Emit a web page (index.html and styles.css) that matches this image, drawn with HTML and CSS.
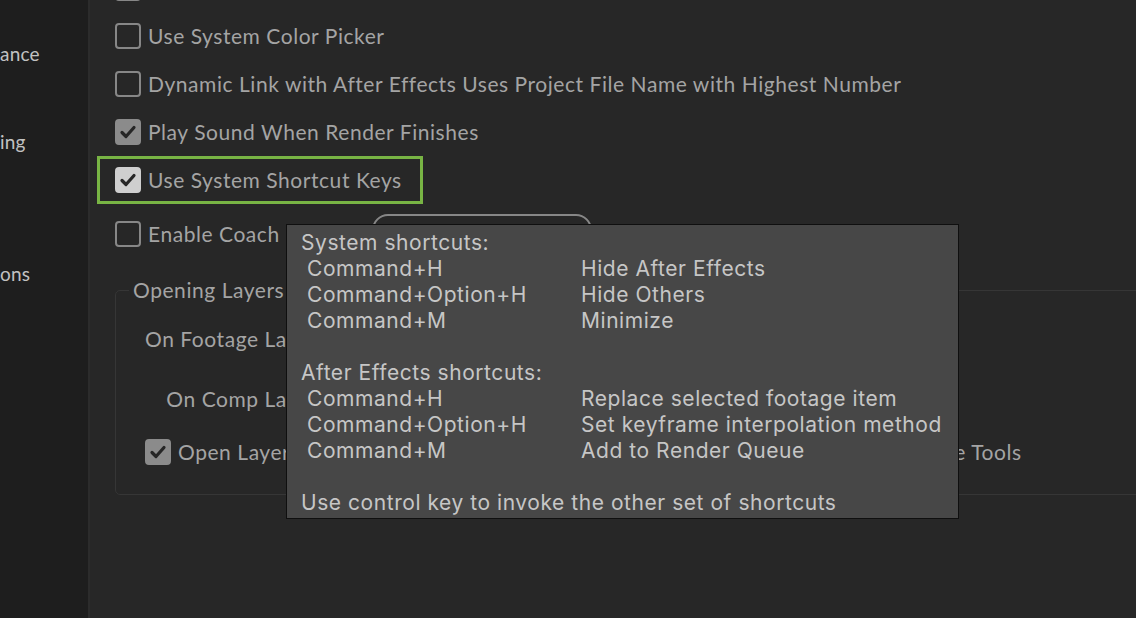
FILE: index.html
```html
<!DOCTYPE html>
<html lang="en">
<head>
<meta charset="utf-8">
<title>Preferences - General</title>
<link rel="stylesheet" href="styles.css">
</head>
<body>
<div class="app">
  <aside class="sidebar">
    <div class="nav-item">ance</div>
    <div class="nav-item"></div>
    <div class="nav-item">ing</div>
    <div class="nav-item"></div>
    <div class="nav-item"></div>
    <div class="nav-item">ons</div>
  </aside>

  <main class="main">
    <div class="opt-list">
      <div class="opt">
        <span class="cb"></span>
        <span class="label">Allow Scripts to Write Files and Access Network</span>
      </div>
      <div class="opt">
        <span class="cb"></span>
        <span class="label">Use System Color Picker</span>
      </div>
      <div class="opt">
        <span class="cb"></span>
        <span class="label">Dynamic Link with After Effects Uses Project File Name with Highest Number</span>
      </div>
      <div class="opt">
        <span class="cb on"><svg viewBox="0 0 26 26" width="26" height="26"><path d="M7 13.5 L11 17.5 L19 8.5" fill="none" stroke="#262626" stroke-width="3.2" stroke-linecap="round" stroke-linejoin="round"/></svg></span>
        <span class="label">Play Sound When Render Finishes</span>
      </div>
      <div class="opt">
        <span class="cb on light"><svg viewBox="0 0 26 26" width="26" height="26"><path d="M7 13.5 L11 17.5 L19 8.5" fill="none" stroke="#262626" stroke-width="3.2" stroke-linecap="round" stroke-linejoin="round"/></svg></span>
        <span class="label">Use System Shortcut Keys</span>
        <span class="highlight"></span>
      </div>
      <div class="opt coach">
        <span class="cb"></span>
        <span class="label coach-label">Enable Coach Marks</span>
        <button class="btn">Reset Coach Marks</button>
      </div>
    </div>

    <fieldset class="group">
      <legend>Opening Layers</legend>
      <div class="dbl-grid">
        <span class="dbl-label">On Footage Layer Double-Click:</span>
        <span class="select">Open in Layer Panel</span>
        <span class="dbl-label">On Comp Layer Double-Click:</span>
        <span class="select">Open Source Comp</span>
      </div>
      <div class="opt group-opt">
        <span class="cb on"><svg viewBox="0 0 26 26" width="26" height="26"><path d="M7 13.5 L11 17.5 L19 8.5" fill="none" stroke="#262626" stroke-width="3.2" stroke-linecap="round" stroke-linejoin="round"/></svg></span>
        <span class="label">Open Layer Panel When Double-Clicking with Paint, Roto Brush, and Refine Edge Tools</span>
      </div>
    </fieldset>
  </main>

  <div class="tooltip">
    <div class="tip-head">System shortcuts:</div>
    <div class="tip-grid">
      <span>Command+H</span><span>Hide After Effects</span>
      <span>Command+Option+H</span><span>Hide Others</span>
      <span>Command+M</span><span>Minimize</span>
    </div>
    <div class="tip-blank"></div>
    <div class="tip-head">After Effects shortcuts:</div>
    <div class="tip-grid">
      <span>Command+H</span><span>Replace selected footage item</span>
      <span>Command+Option+H</span><span>Set keyframe interpolation method</span>
      <span>Command+M</span><span>Add to Render Queue</span>
    </div>
    <div class="tip-blank"></div>
    <div class="tip-head">Use control key to invoke the other set of shortcuts</div>
  </div>
</div>
</body>
</html>
```

FILE: styles.css
```css
html, body {
  margin: 0;
  padding: 0;
}

body {
  background: #272727;
  font-family: Lato, "Open Sans", sans-serif;
  overflow: hidden;
}

.app {
  position: relative;
  display: flex;
  width: 1136px;
  height: 618px;
  overflow: hidden;
}

/* Sidebar */
.sidebar {
  flex: none;
  width: 88px;
  background: #1e1e1e;
  border-right: 2px solid #2c2c2c;
  overflow: hidden;
  padding-top: 32px;
  box-sizing: content-box;
}

.nav-item {
  height: 44px;
  line-height: 44px;
  font-size: 19px;
  letter-spacing: 0.2px;
  color: #c2c2c2;
  white-space: nowrap;
}

/* Main panel */
.main {
  flex: 1;
  min-width: 0;
  padding-left: 25px;
  overflow: hidden;
}

.opt-list {
  display: flex;
  flex-direction: column;
  gap: 22px;
  margin-top: -25px;
}

.opt {
  position: relative;
  display: flex;
  align-items: center;
  gap: 7px;
  height: 26px;
  font-size: 21px;
  letter-spacing: 0.55px;
  color: #a4a4a4;
  white-space: nowrap;
}

.label {
  position: relative;
  top: -1px;
}

.cb {
  flex: none;
  width: 26px;
  height: 26px;
  box-sizing: border-box;
  border: 2px solid #878787;
  border-radius: 4px;
  display: flex;
  align-items: center;
  justify-content: center;
}

.cb svg {
  flex: none;
}

.cb.on {
  background: #8b8b8b;
  border-color: #8b8b8b;
}

.cb.on.light {
  background: #cfcfcf;
  border-color: #cfcfcf;
}

.highlight {
  position: absolute;
  left: -18px;
  top: -11px;
  width: 326px;
  height: 48px;
  box-sizing: border-box;
  border: 3px solid #78b444;
}

.opt.coach {
  margin-top: 6px;
}

.coach-label {
  width: 217px;
}

.btn {
  flex: none;
  width: 220px;
  height: 40px;
  box-sizing: border-box;
  border: 2px solid #878787;
  border-radius: 16px;
  background: transparent;
  color: #a4a4a4;
  font-family: Lato, "Open Sans", sans-serif;
  font-size: 21px;
  padding: 0;
}

/* Group box */
.group {
  margin: 30px -30px 0 0;
  padding: 13px 0 29px 29px;
  border: 1px solid #363636;
  border-radius: 5px;
  min-width: 0;
}

.group legend {
  margin-left: -16px;
  padding: 0 4px;
  font-size: 21px;
  letter-spacing: 0.55px;
  line-height: 26px;
  color: #a4a4a4;
}

.dbl-grid {
  display: grid;
  grid-template-columns: max-content 220px;
  grid-auto-rows: 44px;
  row-gap: 16px;
  column-gap: 12px;
  align-items: center;
  font-size: 21px;
  letter-spacing: 0.55px;
  color: #a4a4a4;
  white-space: nowrap;
}

.dbl-label {
  text-align: right;
}

.select {
  height: 36px;
  line-height: 32px;
  box-sizing: border-box;
  border: 2px solid #555;
  border-radius: 4px;
  padding: 0 10px;
  font-size: 18px;
}

.group-opt {
  margin-top: 19px;
}

/* Tooltip */
.tooltip {
  position: absolute;
  left: 286px;
  top: 224px;
  width: 673px;
  height: 295px;
  box-sizing: border-box;
  background: #474747;
  border: 1px solid #0f0f0f;
  padding: 5px 14px 0 14px;
  font-family: Inter, "Liberation Sans", sans-serif;
  font-size: 21px;
  letter-spacing: 0.55px;
  line-height: 26px;
  color: #c6c6c6;
  white-space: nowrap;
}

.tip-grid {
  display: grid;
  grid-template-columns: 274px auto;
  padding-left: 6px;
}

.tip-blank {
  height: 26px;
}
```
